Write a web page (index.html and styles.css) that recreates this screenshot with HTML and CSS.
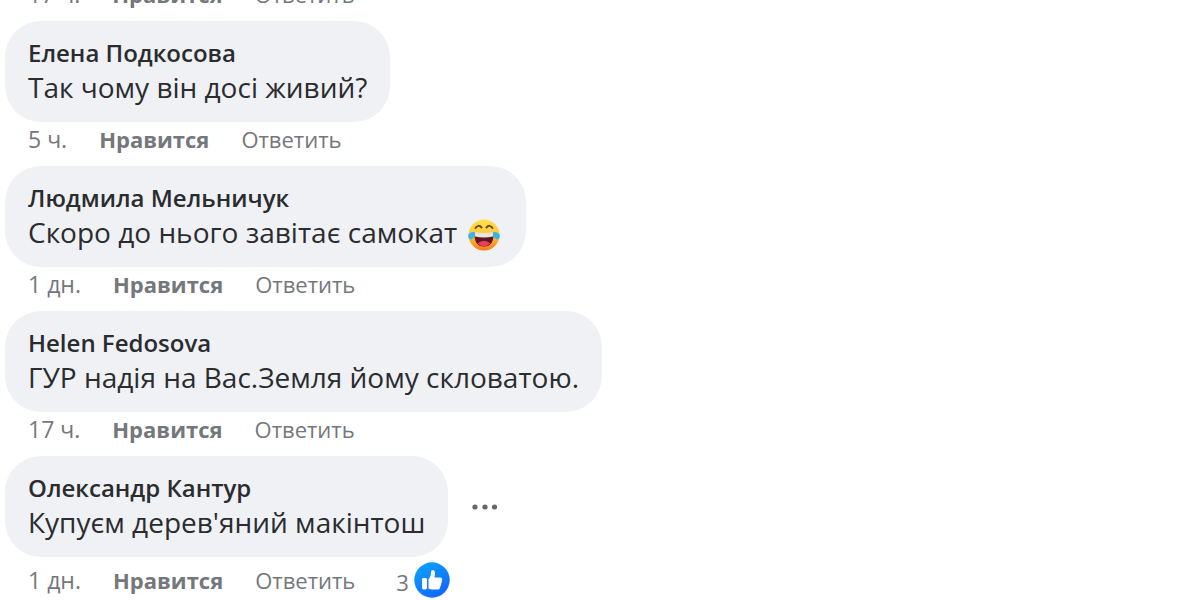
FILE: index.html
```html
<!DOCTYPE html>
<html lang="uk">
<head>
<meta charset="utf-8">
<meta name="viewport" content="width=device-width, initial-scale=1">
<title>Комментарии</title>
<link rel="stylesheet" href="styles.css">
</head>
<body>
<main class="comments">
  <div class="meta">
    <span class="time">17 ч.</span>
    <button class="action like" type="button">Нравится</button>
    <button class="action" type="button">Ответить</button>
  </div>

  <article class="comment">
    <div class="bubble">
      <a class="author" href="#">Елена Подкосова</a>
      <p class="text">Так чому він досі живий?</p>
    </div>
    <div class="meta">
      <span class="time">5 ч.</span>
      <button class="action like" type="button">Нравится</button>
      <button class="action" type="button">Ответить</button>
    </div>
  </article>

  <article class="comment">
    <div class="bubble">
      <a class="author" href="#">Людмила Мельничук</a>
      <p class="text">Скоро до нього завітає самокат
        <svg class="emoji" viewBox="0 0 32 32" role="img" aria-label="Смех до слёз">
          <defs>
            <linearGradient id="face" x1="0" y1="0" x2="0" y2="1">
              <stop offset="0" stop-color="#ffe04f"/>
              <stop offset=".5" stop-color="#fcc63c"/>
              <stop offset="1" stop-color="#f77a1c"/>
            </linearGradient>
          </defs>
          <circle cx="16" cy="16" r="15.5" fill="url(#face)"/>
          <path d="M7.500 9Q10.500 5 13.500 8.500M18.500 8.500Q21.500 5 24.500 9" fill="none" stroke="#6b4a1c" stroke-width="2" stroke-linecap="round"/>
          <path d="M6.500 14Q16 16 25.500 14Q26 27.500 16 27.500Q6 27.500 6.500 14Z" fill="#5b1622"/>
          <path d="M6.500 13Q16 15 25.500 13L25 17.500Q16 19.500 7 17.500Z" fill="#e9e4e2"/>
          <path d="M9.500 24.500Q16 19 22.500 24.500Q16 30 9.500 24.500Z" fill="#ee3c5a"/>
          <path d="M7 13Q1 12.500 .2 16.500Q0 20.500 3 20.500Q6.500 20 7 13Z" fill="#35b5e8"/>
          <path d="M25 13Q31 12.500 31.800 16.500Q32 20.500 29 20.500Q25.500 20 25 13Z" fill="#35b5e8"/>
        </svg>
      </p>
    </div>
    <div class="meta">
      <span class="time">1 дн.</span>
      <button class="action like" type="button">Нравится</button>
      <button class="action" type="button">Ответить</button>
    </div>
  </article>

  <article class="comment">
    <div class="bubble">
      <a class="author" href="#">Helen Fedosova</a>
      <p class="text">ГУР надія на Вас.Земля йому скловатою.</p>
    </div>
    <div class="meta">
      <span class="time">17 ч.</span>
      <button class="action like" type="button">Нравится</button>
      <button class="action" type="button">Ответить</button>
    </div>
  </article>

  <article class="comment">
    <div class="row">
      <div class="bubble">
        <a class="author" href="#">Олександр Кантур</a>
        <p class="text">Купуєм дерев'яний макінтош</p>
      </div>
      <button class="more" type="button" aria-label="Ещё">
        <svg class="dots" viewBox="0 0 26 6" aria-hidden="true">
          <circle cx="3" cy="3" r="2.600"/><circle cx="13" cy="3" r="2.600"/><circle cx="22.500" cy="3" r="2.600"/>
        </svg>
      </button>
    </div>
    <div class="meta reacted">
      <span class="time">1 дн.</span>
      <button class="action like" type="button">Нравится</button>
      <button class="action" type="button">Ответить</button>
      <button class="reactions" type="button" aria-label="3 отметки Нравится">
        <span class="count">3</span>
        <svg class="thumb" viewBox="0 0 36 36" aria-hidden="true">
          <defs>
            <linearGradient id="blue" x1="0" y1="0" x2=".6" y2="1">
              <stop offset="0" stop-color="#0aa8ff"/>
              <stop offset="1" stop-color="#1368fb"/>
            </linearGradient>
          </defs>
          <circle cx="18" cy="18" r="17.700" fill="url(#blue)"/>
          <rect x="8" y="16" width="5" height="11.500" rx="1.400" fill="#fff"/>
          <path d="M14.500 17C16.500 15 17 13 17 10Q17 8 18.800 8Q21 8 21 11.500Q21 13.500 20.400 15.500H26Q28.200 15.500 28.200 17.500Q28.200 18.500 27.600 19.100Q28.300 20.500 27 21.800Q27.500 23.500 26.200 24.400Q26.300 27.500 23.500 27.500H18Q16 27.500 14.500 26.500Z" fill="#fff"/>
        </svg>
      </button>
    </div>
  </article>
</main>
</body>
</html>
```
FILE: styles.css
```css
* {
  box-sizing: border-box;
}

body {
  margin: 0;
  overflow: hidden;
  background: #fff;
  color: #2a2c30;
  font-family: "Open Sans", "Noto Sans", sans-serif;
}

button {
  padding: 0;
  border: 0;
  background: none;
  color: inherit;
  font: inherit;
  cursor: pointer;
}

/* The list is scrolled, so the first row is partly above the edge. */
.comments {
  margin-top: -23px;
  padding-left: 5px;
}

.row {
  display: flex;
  align-items: center;
  gap: 24px;
}

.bubble {
  width: fit-content;
  padding: 15px 23px 18px;
  border-radius: 36px;
  background: #f0f1f5;
}

.author {
  display: block;
  font-size: 24px;
  font-weight: 600;
  line-height: 34px;
  text-decoration: none;
  color: inherit;
}

.text {
  margin: 0;
  font-size: 28px;
  line-height: 34px;
}

.emoji {
  width: 32px;
  height: 32px;
  margin: -4px 3px;
  vertical-align: -4px;
}

.meta {
  display: flex;
  align-items: center;
  gap: 32px;
  height: 44px;
  padding: 0 23px 10px;
  color: #74777b;
  font-size: 22px;
  line-height: 34px;
}

.time {
  font-size: 23px;
}

.like {
  font-weight: 700;
}

.reacted {
  height: 46px;
  padding-bottom: 0;
}

.reactions {
  display: flex;
  align-items: center;
  gap: 5px;
  margin-left: 9px;
}

.count {
  padding-top: 3px;
}

.thumb {
  width: 36px;
  height: 36px;
}

.dots {
  display: block;
  width: 26px;
  height: 6px;
  fill: #65676b;
}
```
